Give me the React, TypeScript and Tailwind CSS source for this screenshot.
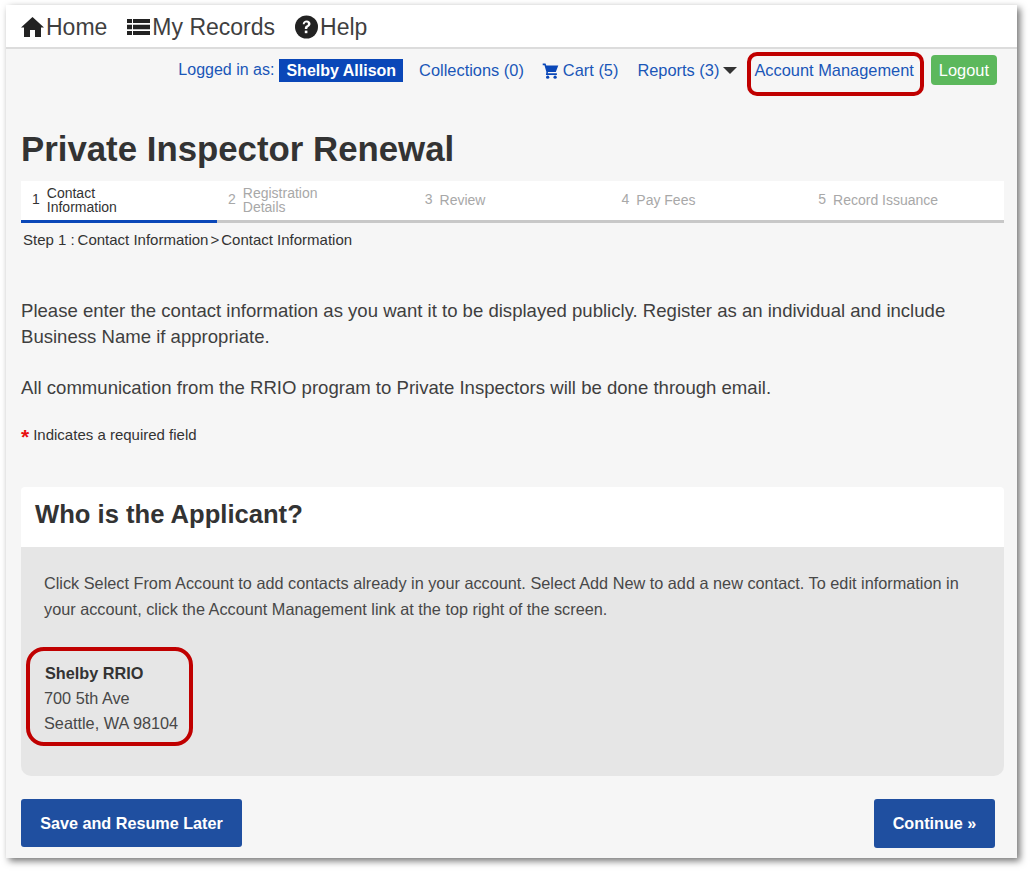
import React from "react";

const sans = "font-['Liberation_Sans',Arial,sans-serif]";

function Step({ n, label, active, two }: { n: number; label: React.ReactNode; active?: boolean; two?: boolean }) {
  return (
    <div className={`h-[42px] pb-[2px] flex items-center pl-[11px] border-b-[3px] ${active ? "w-[196px] border-[#0a47b8]" : "flex-1 border-[#c8c8c8]"}`}>
      <span className={`text-[14px] mr-[7px] ${active ? "text-[#333333]" : "text-[#a8a8a8]"}`}>{n}</span>
      <span className={`text-[14px] leading-[14px] ${active ? "text-[#333333]" : "text-[#a8a8a8]"} ${two ? "" : "mt-[1px]"}`}>{label}</span>
    </div>
  );
}

export default function App() {
  return (
    <div className={`w-[1036px] h-[877px] bg-white pl-[6px] pt-[5px] ${sans}`}>
      <div className="w-[1011px] h-[853px] bg-[#f6f6f6] shadow-[3px_3px_7px_rgba(0,0,0,0.55)] flex flex-col">
        <nav className="h-[44px] pt-[2px] bg-white border-b-2 border-[#dcdcdc] flex items-center pl-[14px] text-[23px] text-[#3f3f3f]">
          <a className="flex items-center mr-[20px]">
            <svg width="25" height="22" viewBox="0 0 25 22" className="mr-[1px]">
              <path d="M12.5 1 L24 11.5 L21 11.5 L21 21 L15 21 L15 14 L10 14 L10 21 L4 21 L4 11.5 L1 11.5 Z" fill="#222222" />
            </svg>
            Home
          </a>
          <a className="flex items-center mr-[19px]">
            <svg width="23" height="16" viewBox="0 0 23 16" className="mr-[2px]">
              <path d="M0 0h5v4H0zM6 0h17v4H6zM0 5.800h5v4.400H0zM6 5.800h17v4.400H6zM0 12h5v4H0zM6 12h17v4H6z" fill="#222222" />
            </svg>
            My Records
          </a>
          <a className="flex items-center">
            <svg width="25" height="24" viewBox="0 0 24 24" className="mr-[1px]">
              <circle cx="12" cy="12" r="11.5" fill="#222222" />
              <path d="M8.200 9.200c.2-2.400 1.900-3.600 4-3.600 2.200 0 3.800 1.300 3.800 3.200 0 1.500-.8 2.300-1.900 3-1 .7-1.300 1.100-1.300 2.200h-2.500c0-1.800.5-2.600 1.700-3.400.9-.6 1.400-1 1.400-1.700 0-.8-.6-1.300-1.600-1.300-1 0-1.600.6-1.700 1.600z" fill="#ffffff" />
              <rect x="10.300" y="15.600" width="2.600" height="2.600" fill="#ffffff" />
            </svg>
            Help
          </a>
        </nav>

        <div className="h-[44px] pb-[2px] flex items-center justify-end pr-[20px] text-[16.4px] text-[#1a56b8] whitespace-nowrap">
          <span className="mr-[5px] text-[16px]">Logged in as:</span>
          <span className="bg-[#0a47b8] text-white font-bold text-[16px] px-[7px] h-[23px] leading-[23px] mr-[16px] mt-[1px]">Shelby Allison</span>
          <a className="mr-[18px]">Collections (0)</a>
          <svg width="17" height="17" viewBox="0 0 24 24" className="mr-[4px]">
            <path d="M1 2h4l1 3h17l-3.500 9H8.500L8 16h13v2.500H5.500L6.200 14 3.500 4.500H1z" fill="#0a47b8" />
            <circle cx="8" cy="21.500" r="2.300" fill="#0a47b8" />
            <circle cx="18.500" cy="21.500" r="2.300" fill="#0a47b8" />
          </svg>
          <a className="mr-[19px]">Cart (5)</a>
          <a className="mr-[4px]">Reports (3)</a>
          <svg width="14" height="7" viewBox="0 0 14 7" className="mr-[17px]"><path d="M0 0h14L7 7z" fill="#333333" /></svg>
          <a className="relative mr-[17px]">
            Account Management
            <span className="absolute left-[-7px] right-[-10px] top-[-6px] bottom-[-14px] border-[4px] border-[#c00000] rounded-[10px]" />
          </a>
          <a className="bg-[#5cb85c] text-white rounded-[4px] h-[30px] leading-[30px] px-[8px]">Logout</a>
        </div>

        <div className="px-[15px] flex-1 flex flex-col">
          <h1 className="mt-[34px] text-[34.800px] leading-[44px] font-bold text-[#333333]">Private Inspector Renewal</h1>
          <div className="mt-[10px] w-[983px] bg-white flex">
            <Step n={1} active two label={<>Contact<br />Information</>} />
            <Step n={2} two label={<>Registration<br />Details</>} />
            <Step n={3} label="Review" />
            <Step n={4} label="Pay Fees" />
            <Step n={5} label="Record Issuance" />
          </div>
          <div className="mt-[8px] pl-[2px] flex text-[15px] leading-[18px] text-[#333333]">
            <span>Step 1</span>
            <span className="ml-[4px] mr-[3px]">:</span>
            <span>Contact Information</span>
            <span className="mx-[2px]">&gt;</span>
            <span>Contact Information</span>
          </div>

          <p className="mt-[49px] text-[18.570px] leading-[26px] text-[#3f3f3f] w-[960px]">
            Please enter the contact information as you want it to be displayed publicly. Register as an individual and include Business Name if appropriate.
          </p>
          <p className="mt-[25px] text-[18.570px] leading-[26px] text-[#3f3f3f]">
            All communication from the RRIO program to Private Inspectors will be done through email.
          </p>
          <div className="mt-[24px] flex text-[15px] leading-[20px] text-[#333333]">
            <span className="text-[#e81010] font-bold text-[21px] leading-[24px] mr-[4px]">*</span>Indicates a required field
          </div>

          <section className="mt-[38px] w-[983px]">
            <h2 className="h-[60px] pb-[6px] bg-white rounded-t-[4px] pl-[14px] flex items-center text-[25.600px] font-bold text-[#333333]">Who is the Applicant?</h2>
            <div className="h-[229px] bg-[#e6e6e6] rounded-b-[10px] pl-[23px] pr-[30px] pt-[23px] text-[16.270px] leading-[26px] text-[#484848]">
              <p>Click Select From Account to add contacts already in your account. Select Add New to add a new contact. To edit information in your account, click the Account Management link at the top right of the screen.</p>
              <div className="relative mt-[39px] w-fit leading-[25px]">
                <div className="font-bold text-[#333333] ml-[1px]">Shelby RRIO</div>
                <div>700 5th Ave</div>
                <div>Seattle, WA 98104</div>
                <span className="absolute left-[-18px] right-[-15px] top-[-14px] bottom-[-10px] border-[4px] border-[#c00000] rounded-[18px]" />
              </div>
            </div>
          </section>

          <div className="mt-[23px] w-[974px] flex justify-between text-[16.200px] font-bold text-white">
            <a className="h-[48px] w-[221px] bg-[#1f4fa0] rounded-[3px] flex items-center justify-center">Save and Resume Later</a>
            <a className="h-[49px] w-[121px] bg-[#1f4fa0] rounded-[3px] flex items-center justify-center">Continue »</a>
          </div>
        </div>
      </div>
    </div>
  );
}
